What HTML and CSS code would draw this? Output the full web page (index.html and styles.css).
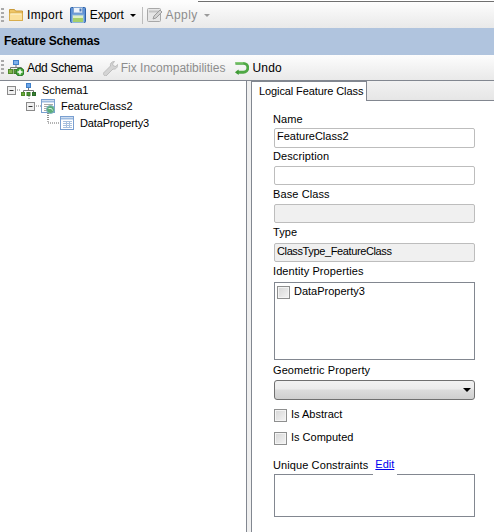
FILE: index.html
```html
<!DOCTYPE html>
<html lang="en">
<head>
<meta charset="utf-8">
<title>Feature Schemas</title>
<link rel="stylesheet" href="styles.css">
</head>
<body>
<div class="app">
  <div class="topline"><span class="topline-rule"></span></div>
  <div class="toolbar toolbar-top">
    <span class="grip"></span>
    <span class="tool tool-import">
      <svg class="ico" width="16" height="16" viewBox="0 0 16 16"><path d="M1.500 2.500h5l1 1.500h7v9.500h-13z" fill="#eec566" stroke="#c99a3a"/><path d="M1.500 13.500v-7.500h13v7.500z" fill="#fbe09a" stroke="#d8ad4c"/><path d="M2.500 7h11" stroke="#fff6d6"/></svg>
      <span>Import</span>
    </span>
    <span class="tool tool-export">
      <svg class="ico" width="16" height="16" viewBox="0 0 16 16"><rect x="0.500" y="0.500" width="15" height="15" rx="1" fill="#5f93d6" stroke="#2f62a8"/><rect x="3.500" y="0.500" width="9" height="5.500" fill="#eef4fb" stroke="#7fa3d1"/><rect x="9.500" y="1.500" width="2" height="3" fill="#4a78b8"/><rect x="2.500" y="8" width="11" height="7.500" fill="#dff0c4" stroke="#8fb7d9"/><rect x="3" y="11" width="10" height="4" fill="#a5cf6a"/></svg>
      <span>Export</span>
      <i class="caret"></i>
    </span>
    <span class="sep"></span>
    <span class="tool tool-apply">
      <svg class="ico" width="16" height="16" viewBox="0 0 16 16"><rect x="0.500" y="1.500" width="13" height="13" rx="1" fill="#e6e6e6" stroke="#a8a8a8"/><path d="M2 4.500h10" stroke="#c4c4c4" stroke-width="2"/><path d="M6 12l1-3 6-6 2 2-6 6z" fill="#d2d2d2" stroke="#9c9c9c"/></svg>
      <span class="off">Apply</span>
      <i class="caret caret-off"></i>
    </span>
  </div>
  <div class="band">Feature Schemas</div>
  <div class="toolbar toolbar-sub">
    <span class="grip"></span>
    <span class="tool tool-add">
      <svg class="ico" width="16" height="16" viewBox="0 0 16 16"><rect x="5.500" y="0.500" width="5" height="4" fill="#7fb0ea" stroke="#3f7fc9"/><path d="M8 5v2.500M2.500 9.500v-2h11v2" fill="none" stroke="#777"/><rect x="0.500" y="9.500" width="4" height="4" fill="#7fb24a" stroke="#4f8a2a"/><rect x="6" y="9.500" width="4" height="4" fill="#5f9c3a" stroke="#3f7a2a"/><circle cx="12" cy="12" r="4" fill="#46a83a" stroke="#2a7a2a"/><path d="M12 9.500v5M9.500 12h5" stroke="#fff" stroke-width="1.500"/></svg>
      <span>Add Schema</span>
    </span>
    <span class="tool tool-fix">
      <svg class="ico" width="16" height="16" viewBox="0 0 16 16"><path d="M1.500 13l7-7c-.6-2 .8-4.500 4-4.500l-2 2.500 1 2 2.500.5 1.500-2c.4 3-2 5.200-4.500 4.500l-7 7c-1.500 0-2.500-1-2.500-2.500z" fill="#d4d4d4" stroke="#bdbdbd"/></svg>
      <span class="off">Fix Incompatibilities</span>
    </span>
    <span class="tool tool-undo">
      <svg class="ico" width="15" height="16" viewBox="0 0 16 16"><path d="M1.500 3h8.500a4 4 0 0 1 0 9.500H3" fill="none" stroke="#4fa845" stroke-width="3"/><path d="M1 12.500l4-3v6z" fill="#3f9a35"/><path d="M2 2.500h8" stroke="#a9e096"/></svg>
      <span>Undo</span>
    </span>
  </div>
  <div class="main">
    <div class="tree">
      <div class="node node-root">
        <svg class="tree-svg" width="37" height="16" viewBox="0 0 37 16">
          <path d="M15 8h6M29 14v4" stroke="#777" stroke-dasharray="1 1" fill="none"/>
          <rect x="7.500" y="4.500" width="8" height="8" fill="#f0f0f0" stroke="#8a8a8a"/><path d="M9.500 8.500h4" stroke="#333"/>
          <rect x="26.500" y="1.500" width="4" height="4" fill="#6ea6e8" stroke="#3f7fc9"/>
          <path d="M28.500 6v2.500M23.500 10.500v-2h10v2" fill="none" stroke="#777"/>
          <rect x="21.500" y="10.500" width="3" height="3" fill="#6cab3e" stroke="#4f8a2a"/><rect x="27" y="10.500" width="3" height="3" fill="#4f9a35" stroke="#3f7a2a"/><rect x="32.500" y="10.500" width="3" height="3" fill="#3c8030" stroke="#2a6a2a"/>
        </svg>
        <span>Schema1</span>
      </div>
      <div class="node node-class">
        <svg class="tree-svg" width="55" height="16" viewBox="0 0 55 16">
          <path d="M34 8h7M48 15v8" stroke="#777" stroke-dasharray="1 1" fill="none"/>
          <rect x="26.500" y="4.500" width="8" height="8" fill="#f0f0f0" stroke="#8a8a8a"/><path d="M28.500 8.500h4" stroke="#333"/>
          <rect x="41.500" y="1.500" width="13" height="13" fill="#fff" stroke="#7a9fd0"/><path d="M42 3.500h12" stroke="#9dbbe0" stroke-width="2"/><path d="M44 6.500h9M44 8.500h9M44 10.500h9M44 12.500h9" stroke="#a8a8a8"/>
          <circle cx="50.500" cy="11.500" r="4" fill="#5cae78" stroke="#7fb0c8"/><path d="M48.500 10.500h3l1 2" stroke="#cfe9df" fill="none"/>
        </svg>
        <span>FeatureClass2</span>
      </div>
      <div class="node node-prop">
        <svg class="tree-svg" width="74" height="16" viewBox="0 0 74 16">
          <path d="M48 -2v10M48 8h12" stroke="#666" stroke-dasharray="1 1" fill="none"/>
          <rect x="60.500" y="1.500" width="13" height="13" fill="#fff" stroke="#7a9fd0"/><path d="M61 3.500h12" stroke="#9dbbe0" stroke-width="2"/><path d="M63 6.500h9M63 8.500h9M63 10.500h9M63 12.500h9M66.500 6v7M69.500 6v7" stroke="#a8c0de"/>
        </svg>
        <span>DataProperty3</span>
      </div>
    </div>
    <div class="gutter"></div>
    <div class="tabs">
      <div class="tabstrip"><span class="tab">Logical Feature Class</span></div>
      <div class="form">
        <label class="lbl">Name</label>
        <div class="input">FeatureClass2</div>
        <label class="lbl">Description</label>
        <div class="input"></div>
        <label class="lbl">Base Class</label>
        <div class="input input-off"></div>
        <label class="lbl">Type</label>
        <div class="input input-off input-type">ClassType_FeatureClass</div>
        <label class="lbl">Identity Properties</label>
        <div class="list">
          <div class="list-row"><i class="check"></i><span class="check-text">DataProperty3</span></div>
        </div>
        <label class="lbl lbl-geo">Geometric Property</label>
        <div class="combo"><i class="combo-arrow"></i></div>
        <div class="check-row check-first"><i class="check"></i><span class="check-text">Is Abstract</span></div>
        <div class="check-row"><i class="check"></i><span class="check-text">Is Computed</span></div>
        <div class="uc-head"><span class="uc-title">Unique Constraints</span><a class="edit" href="#">Edit</a></div>
        <div class="uc-box"></div>
      </div>
    </div>
  </div>
</div>
</body>
</html>
```
FILE: styles.css
```css
* { box-sizing: border-box; }
html, body { margin: 0; padding: 0; }
body { font: 12px/14px "Liberation Sans", Arial, sans-serif; color: #000; background: #fff; }
.app { width: 494px; height: 532px; overflow: hidden; display: flex; flex-direction: column; }

.topline { height: 2px; flex: none; background: #fdfdfd; display: flex; justify-content: flex-end; }
.topline-rule { width: 296px; height: 2px; border-bottom: 1px solid #707070; background: #fff; }
.toolbar { display: flex; align-items: center; background: linear-gradient(#fdfdfd, #e9e9e9); flex: none; }
.toolbar-top { height: 26px; }
.toolbar-sub { height: 25px; }
.grip { width: 3px; height: 15px; margin-left: 1px; background: repeating-linear-gradient(#a9a9a9 0 2px, transparent 2px 4px); flex: none; }
.tool { display: flex; align-items: center; flex: none; }
.ico { display: block; flex: none; margin-right: 3px; }
.off { color: #8d8d8d; }
.tool-import { margin-left: 4px; letter-spacing: 0.3px; }
.tool-export { margin-left: 7px; letter-spacing: -0.15px; }
.tool-export .ico { margin-right: 4px; }
.tool-apply { margin-left: 4px; letter-spacing: 0.4px; }
.caret { width: 0; height: 0; margin-left: 6px; border: 3px solid transparent; border-top: 3px solid #000; border-bottom: 0; }
.sep { width: 1px; height: 17px; background: #bcbcbc; margin-left: 6px; }
.caret-off { border-top-color: #9a9a9a; }
.band { height: 27px; flex: none; background: #b0c4de; font-weight: bold; line-height: 27px; padding-left: 4px; letter-spacing: -0.25px; }
.tool-add { margin-left: 4px; letter-spacing: -0.3px; }
.tool-fix { margin-left: 9px; }
.tool-undo { margin-left: 9px; letter-spacing: 0.2px; }

.main { flex: 1; display: flex; border-top: 1px solid #828790; min-height: 0; }
.tree { width: 247px; flex: none; border-right: 1px solid #828790; font-size: 11px; }
.node { display: flex; align-items: center; height: 16px; }
.tree-svg { display: block; flex: none; overflow: visible; margin-right: 5px; }
.node-root { height: 17px; }
.node-class { height: 16px; }
.node-prop { height: 17px; letter-spacing: -0.15px; }
.node-prop .tree-svg { margin-right: 6px; }
.node-class .tree-svg { margin-right: 6px; }
.gutter { width: 4px; flex: none; background: #f0f0f0; }
.tabs { flex: 1; min-width: 0; display: flex; flex-direction: column; background: #fff; font-size: 11px; }
.tabstrip { height: 20px; flex: none; display: flex; background: linear-gradient(#f2f2f2, #e6e6e6); border-bottom: 1px solid #828790; }
.tab { width: 116px; height: 20px; background: #fff; border: 1px solid #828790; border-bottom: 0; padding-left: 7px; line-height: 18px; white-space: nowrap; letter-spacing: -0.1px; }
.form { flex: 1; border-left: 1px solid #828790; padding: 10px 19px 0 22px; display: grid; grid-template-columns: 1fr; grid-template-rows: 17px 20px 18px 19px 19px 19px 20px 19px 20px 78px 20px 20px; align-content: start; }
.lbl { display: flex; align-items: center; margin-left: -1px; letter-spacing: 0.1px; padding-bottom: 2px; }
.lbl-geo { padding-bottom: 0; }
.input { border: 1px solid #bdbdbd; border-radius: 2px; padding-left: 2px; line-height: 14px; background: #fff; }
.input-off { background: #f0f0f0; }
.input-type { letter-spacing: -0.38px; }
.list { border: 1px solid #828790; padding: 2px; }
.list-row { display: flex; align-items: center; gap: 4px; height: 14px; }
.check { display: block; width: 13px; height: 13px; flex: none; border: 1px solid #8e8f8f; background: linear-gradient(135deg, #d6d6d6, #f4f4f4); box-shadow: inset 0 0 0 1px #f4f4f4; }
.check-text { margin-bottom: 2px; }
.combo { border: 1px solid #707070; border-radius: 3px; background: linear-gradient(#f2f2f2, #ebebeb 45%, #dcdcdc 50%, #cfcfcf); display: flex; align-items: center; justify-content: flex-end; padding-right: 3px; }
.combo-arrow { width: 0; height: 0; border: 4px solid transparent; border-top: 4px solid #000; border-bottom: 0; }
.check-row { display: flex; align-items: center; gap: 4px; height: 20px; margin-top: 3px; }
.check-first { margin-top: 5px; }
.uc-head { display: flex; align-items: center; height: 19px; margin-top: 8px; margin-bottom: -1px; position: relative; z-index: 1; }
.uc-title { margin-left: -1px; letter-spacing: 0.1px; margin-bottom: 2px; }
.edit { color: #0000ee; text-decoration: underline; background: #fff; padding: 0 3px 0 2px; margin-left: 5px; height: 19px; line-height: 17px; }
.uc-box { height: 43px; border: 1px solid #828790; }
```
